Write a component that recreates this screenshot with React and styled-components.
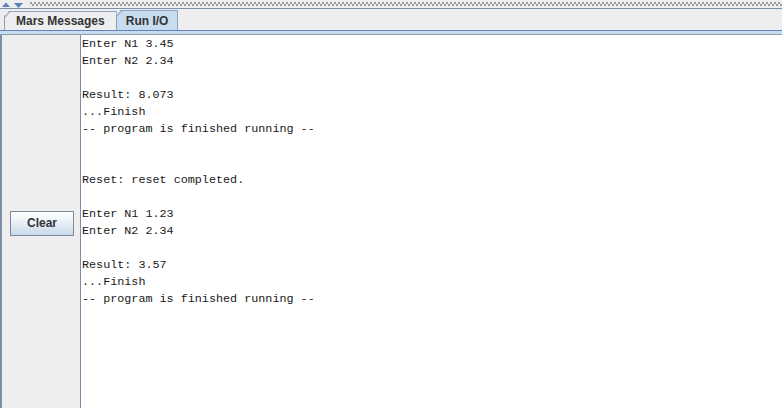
import React from 'react';
import styled, { createGlobalStyle } from 'styled-components';

const GlobalStyle = createGlobalStyle`
  html, body {
    margin: 0;
    padding: 0;
    background: #ffffff;
  }
  #root {
    width: 782px;
    height: 408px;
  }
`;

const Frame = styled.div`
  width: 782px;
  height: 408px;
  display: flex;
  flex-direction: column;
  overflow: hidden;
  background: #eeeeee;
`;

const Divider = styled.div`
  height: 8px;
  border-bottom: 1px solid #7a8ea8;
  display: flex;
  align-items: flex-start;
  gap: 4px;
  padding-left: 2px;
  background-color: #eeeeee;
`;

const Dots = styled.div`
  flex: 1;
  align-self: stretch;
  margin-left: 3px;
  background-image:
    radial-gradient(circle at 1px 1px, #9a9a9a 0.8px, transparent 1px),
    radial-gradient(circle at 1px 1px, #9a9a9a 0.8px, transparent 1px);
  background-size: 4px 8px, 4px 8px;
  background-position: 0 2px, 2px 4px;
  background-repeat: repeat-x;
`;

const Arrow = styled.svg`
  display: block;
  margin-top: ${p => p.$top}px;
`;

const TabBar = styled.div`
  height: 21px;
  display: flex;
  align-items: flex-end;
  padding-left: 4px;
`;

const Tab = styled.div`
  position: relative;
  height: ${p => (p.$active ? '20px' : '19px')};
  box-sizing: border-box;
  padding: 0 ${p => (p.$active ? '9px' : '11px')};
  display: flex;
  align-items: center;
  font-family: "Liberation Sans", Arial, sans-serif;
  font-weight: bold;
  font-size: 12px;
  color: #333333;
  background: ${p => (p.$active ? '#c8dcf0' : '#eeeeee')};
  border: 1px solid #8da2bd;
  border-bottom: none;
  clip-path: polygon(5px 0, 100% 0, 100% 100%, 0 100%, 0 5px);
  margin-right: -1px;

  &::before {
    content: "";
    position: absolute;
    left: -1px;
    top: -1px;
    width: 8px;
    height: 1px;
    background: #8da2bd;
    transform-origin: 0 0;
    transform: translate(0, 6px) rotate(-45deg);
  }
`;

const TabRule = styled.div`
  height: 5px;
  box-sizing: border-box;
  border-top: 1px solid #6382bf;
  border-bottom: 1px solid #8ca0b4;
  background: #c8dcf0;
`;

const Body = styled.div`
  flex: 1;
  display: flex;
  min-height: 0;
`;

const SidePanel = styled.div`
  width: 81px;
  flex-shrink: 0;
  box-sizing: border-box;
  border-left: 2px solid #7a8ea8;
  border-right: 1px solid #7a8ea8;
  background: #eeeeee;
  display: flex;
  align-items: center;
  justify-content: center;
  padding-left: 2px;
  padding-top: 3px;
`;

const ClearButton = styled.button`
  width: 64px;
  height: 25px;
  border: 1px solid #7a8a99;
  border-radius: 0;
  background: linear-gradient(to bottom, #ffffff 0%, #f2f6fb 30%, #c8d8ea 100%);
  font-family: "Liberation Sans", Arial, sans-serif;
  font-weight: bold;
  font-size: 12px;
  color: #333333;
  padding: 0;
  cursor: pointer;
`;

const Output = styled.pre`
  flex: 1;
  margin: 0;
  padding: 1px 0 0 1px;
  background: #ffffff;
  font-family: "Liberation Mono", "Courier New", monospace;
  font-size: 11.75px;
  line-height: 17px;
  color: #1a1a1a;
  overflow: hidden;
`;

const lines = [
  'Enter N1 3.45',
  'Enter N2 2.34',
  '',
  'Result: 8.073',
  '...Finish',
  '-- program is finished running --',
  '',
  '',
  'Reset: reset completed.',
  '',
  'Enter N1 1.23',
  'Enter N2 2.34',
  '',
  'Result: 3.57',
  '...Finish',
  '-- program is finished running --',
];

const App = () => {
  return (
    <>
      <GlobalStyle />
      <Frame>
        <Divider>
          <Arrow $top={2} width="8" height="5" viewBox="0 0 8 5">
            <polygon points="0,5 4,0.5 8,5" fill="#5f7fb8" />
          </Arrow>
          <Arrow $top={3} width="9" height="5" viewBox="0 0 9 5">
            <polygon points="0,0 9,0 4.5,5" fill="#5f7fb8" />
          </Arrow>
          <Dots />
        </Divider>
        <TabBar>
          <Tab>Mars Messages</Tab>
          <Tab $active>Run I/O</Tab>
        </TabBar>
        <TabRule />
        <Body>
          <SidePanel>
            <ClearButton>Clear</ClearButton>
          </SidePanel>
          <Output>{lines.join('\n')}</Output>
        </Body>
      </Frame>
    </>
  );
};

export default App;
